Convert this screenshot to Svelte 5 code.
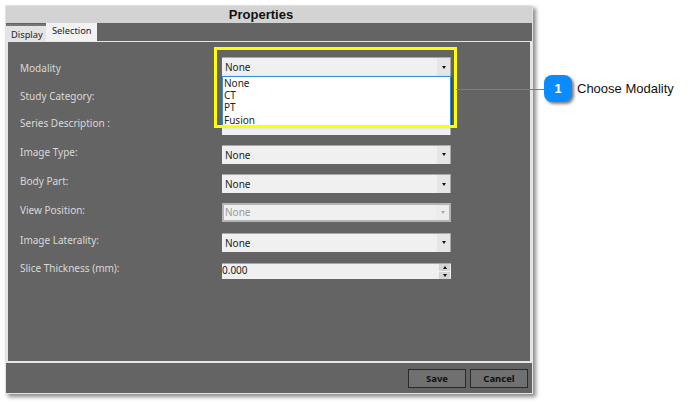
<script>
  const rows = [
    { label: 'Modality', lift: 'l1' },
    { label: 'Study Category:', blank: true, lift: 'l0' },
    { label: 'Series Description :', blank: true, lift: 'l2' },
    { label: 'Image Type:', lift: 'l3' },
    { label: 'Body Part:', lift: 'l3' },
    { label: 'View Position:', disabled: true, lift: 'l3' },
    { label: 'Image Laterality:', lift: 'l3' }
  ];
  const options = ['None', 'CT', 'PT', 'Fusion'];
</script>

<div class="page">
  <div class="window">
    <div class="title">Properties</div>
    <div class="tabs">
      <div class="tab inactive">Display</div>
      <div class="tab active">Selection</div>
    </div>
    <div class="pane">
      <div class="form">
        {#each rows as r}
          <div class="label {r.lift}">{r.label}</div>
          <div class="combo" class:disabled={r.disabled}>
            {#if !r.blank}
              <span class="value">None</span>
              <span class="arrow"><i></i></span>
            {/if}
          </div>
        {/each}
        <div class="label l4">Slice Thickness (mm):</div>
        <div class="spin">
          <span class="spinval">0.000</span>
          <span class="steps"><b><i class="up"></i></b><b><i></i></b></span>
        </div>
      </div>
      <div class="list">
        {#each options as o}<div>{o}</div>{/each}
      </div>
      <div class="highlight"></div>
    </div>
    <div class="footer">
      <button>Save</button>
      <button>Cancel</button>
    </div>
  </div>
  <div class="line"></div>
  <div class="callout">
    <div class="bubble">1</div>
    <div class="caption">Choose Modality</div>
  </div>
</div>

<style>
  :global(body) { margin: 0; background: #fff; }
  .page {
    position: relative;
    width: 690px;
    height: 403px;
    overflow: hidden;
    padding: 5px 0 0 5px;
    box-sizing: border-box;
    font-family: "Noto Sans", sans-serif;
  }
  .window {
    width: 528px;
    height: 389px;
    background: #646464;
    border: 1px solid #e2e2e2;
    box-sizing: border-box;
    display: flex;
    flex-direction: column;
    box-shadow: 3px 3px 4px rgba(0,0,0,0.45);
  }
  .title {
    height: 17px;
    flex: none;
    background: #d3d3d3;
    text-align: center;
    padding-right: 16px;
    font: bold 13px/17px "Liberation Sans", sans-serif;
    color: #111;
  }
  .tabs {
    display: flex;
    height: 18px;
    flex: none;
    align-items: flex-end;
  }
  .tab {
    font-size: 9.3px;
    line-height: 14px;
    color: #222;
    box-sizing: border-box;
  }
  .inactive {
    width: 40px;
    height: 17px;
    padding-left: 5px;
    padding-top: 2px;
    background: #e4e4e4;
    border-top: 2px solid #777;
  }
  .active {
    width: 51px;
    height: 18px;
    padding-left: 6px;
    padding-top: 1px;
    background: #f2f2f2;
  }
  .pane {
    position: relative;
    flex: 1;
    border: 2px solid #e6e6e6;
    border-top-width: 1px;
    background: #646464;
  }
  .form {
    display: grid;
    grid-template-columns: 202px 229px;
    grid-auto-rows: 19px;
    row-gap: 10.3px;
    padding: 15px 0 0 12px;
    align-items: center;
  }
  .label {
    font-size: 10px;
    color: #d9d9d9;
  }
  .l1 { margin-top: 2px; }
  .l2 { margin-bottom: 4px; }
  .l3 { margin-bottom: 5px; }
  .l4 { margin-bottom: 8px; }
  .combo {
    height: 19px;
    background: #f0f0f0;
    border-top: 1px solid #a8a8a8;
    border-right: 1px solid #a8a8a8;
    box-sizing: border-box;
    display: flex;
    justify-content: space-between;
    align-items: stretch;
    font-size: 10px;
    color: #222;
  }
  .value { padding-left: 3px; line-height: 18px; }
  .arrow {
    width: 13px;
    background: #e6e6e6;
    display: flex;
    align-items: center;
    justify-content: center;
  }
  .arrow i, .steps i {
    width: 0;
    height: 0;
    border-left: 2.5px solid transparent;
    border-right: 2.5px solid transparent;
    border-top: 3px solid #111;
  }
  .steps i.up { border-top: 0; border-bottom: 3px solid #111; }
  .disabled { border: 2px solid #b4b4b4; color: #999; }
  .disabled .value { line-height: 15px; padding-left: 1px; }
  .disabled .arrow { background: #ececec; }
  .disabled .arrow i { border-top-color: #aaa; }
  .spin {
    height: 16px;
    background: #f0f0f0;
    border-top: 1px solid #a8a8a8;
    box-sizing: border-box;
    display: flex;
    justify-content: space-between;
    font-size: 10px;
    color: #222;
    align-self: start;
    margin-top: 1px;
  }
  .spinval { line-height: 13px; }
  .steps {
    width: 11px;
    margin-right: 1px;
    display: flex;
    flex-direction: column;
    gap: 1px;
  }
  .steps b {
    flex: 1;
    background: #d4d4d4;
    display: flex;
    align-items: center;
    justify-content: center;
  }
  .list {
    position: absolute;
    left: 214px;
    top: 34px;
    width: 229px;
    height: 50px;
    box-sizing: border-box;
    background: #fff;
    border: 1px solid #2f8fe0;
    border-bottom: 0;
    padding-left: 1px;
    font-size: 10px;
    line-height: 12.3px;
    color: #222;
    box-shadow: 1px 1px 2px rgba(0,0,0,0.5);
  }
  .list div:first-child { margin-top: -0.4px; }
  .highlight {
    position: absolute;
    left: 206px;
    top: 5px;
    width: 243px;
    height: 81px;
    box-sizing: border-box;
    border: 3px solid #ffff00;
  }
  .footer {
    flex: none;
    height: 30px;
    display: flex;
    justify-content: flex-end;
    align-items: flex-start;
    gap: 4px;
    padding: 6px 4px 0 0;
    box-sizing: border-box;
  }
  button {
    width: 58px;
    height: 19px;
    background: #707070;
    border: 1px solid #2a2a2a;
    padding: 0;
    font: bold 9.5px "Noto Sans", sans-serif;
    color: #111;
  }
  .line {
    position: absolute;
    left: 456px;
    top: 89px;
    width: 90px;
    height: 1px;
    background: #2f8fe0;
  }
  .callout {
    position: absolute;
    left: 544px;
    top: 75px;
    display: flex;
    align-items: center;
    gap: 5px;
  }
  .bubble {
    width: 28px;
    height: 27px;
    border-radius: 8px;
    background: #0a8cff;
    color: #fff;
    font: bold 13px/27px "Liberation Sans", sans-serif;
    text-align: center;
    box-shadow: 2px 2px 3px rgba(0,0,0,0.5);
  }
  .caption {
    font: 13px "Liberation Sans", sans-serif;
    color: #111;
  }
</style>
